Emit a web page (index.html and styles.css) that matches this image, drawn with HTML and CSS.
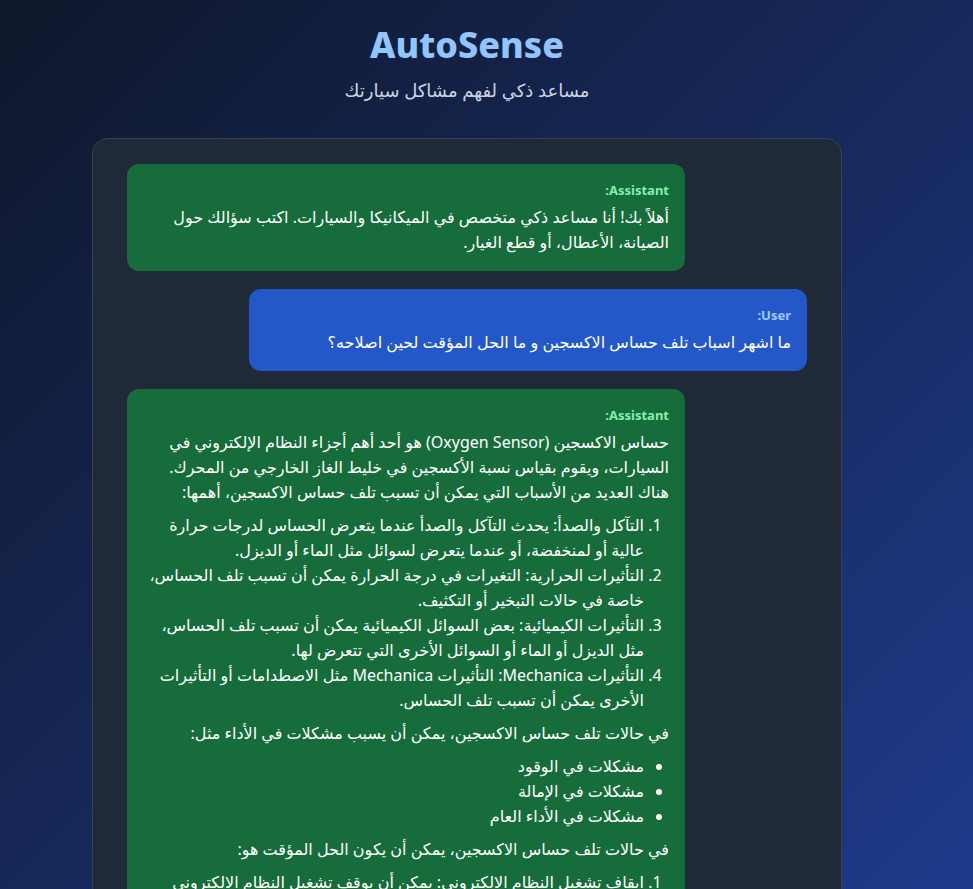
FILE: index.html
```html
<!DOCTYPE html>
<html lang="ar" dir="rtl">
<head>
<meta charset="utf-8">
<title>AutoSense</title>
<link rel="stylesheet" href="styles.css">
</head>
<body>
<div class="page">
  <header class="header">
    <h1 class="title" dir="ltr">AutoSense</h1>
    <p class="subtitle">مساعد ذكي لفهم مشاكل سيارتك</p>
  </header>
  <main class="chat">
    <div class="msg msg-assistant">
      <div class="label">Assistant:</div>
      <p>أهلاً بك! أنا مساعد ذكي متخصص في الميكانيكا والسيارات. اكتب سؤالك حول الصيانة، الأعطال، أو قطع الغيار.</p>
    </div>
    <div class="msg msg-user">
      <div class="label">User:</div>
      <p>ما اشهر اسباب تلف حساس الاكسجين و ما الحل المؤقت لحين اصلاحه؟</p>
    </div>
    <div class="msg msg-assistant">
      <div class="label">Assistant:</div>
      <p>حساس الاكسجين (Oxygen Sensor) هو أحد أهم أجزاء النظام الإلكتروني في السيارات، ويقوم بقياس نسبة الأكسجين في خليط الغاز الخارجي من المحرك. هناك العديد من الأسباب التي يمكن أن تسبب تلف حساس الاكسجين، أهمها:</p>
      <ol>
        <li>التآكل والصدأ: يحدث التآكل والصدأ عندما يتعرض الحساس لدرجات حرارة عالية أو لمنخفضة، أو عندما يتعرض لسوائل مثل الماء أو الديزل.</li>
        <li>التأثيرات الحرارية: التغيرات في درجة الحرارة يمكن أن تسبب تلف الحساس، خاصة في حالات التبخير أو التكثيف.</li>
        <li>التأثيرات الكيميائية: بعض السوائل الكيميائية يمكن أن تسبب تلف الحساس، مثل الديزل أو الماء أو السوائل الأخرى التي تتعرض لها.</li>
        <li>التأثيرات Mechanica: التأثيرات Mechanica مثل الاصطدامات أو التأثيرات الأخرى يمكن أن تسبب تلف الحساس.</li>
      </ol>
      <p>في حالات تلف حساس الاكسجين، يمكن أن يسبب مشكلات في الأداء مثل:</p>
      <ul>
        <li>مشكلات في الوقود</li>
        <li>مشكلات في الإمالة</li>
        <li>مشكلات في الأداء العام</li>
      </ul>
      <p>في حالات تلف حساس الاكسجين، يمكن أن يكون الحل المؤقت هو:</p>
      <ol>
        <li>ايقاف تشغيل النظام الالكتروني: يمكن أن يوقف تشغيل النظام الالكتروني الخاص بالحساس مؤقتاً حتى يتم اصلاحه.</li>
        <li>تنظيف الحساس: يمكن تنظيف الحساس من الأوساخ والرواسب.</li>
      </ol>
    </div>
  </main>
</div>
</body>
</html>
```
FILE: styles.css
```css
* { box-sizing: border-box; }
html, body { margin: 0; padding: 0; }
body {
  min-height: 100vh;
  background: linear-gradient(135deg, #0f172a 0%, #1e3a8a 100%) fixed;
  color: #f1f5f9;
  font-family: "Segoe UI", "Noto Sans", "DejaVu Sans", sans-serif;
}
.page {
  width: 934px;
  margin-left: 0;
  margin-right: auto;
  padding-top: 20px;
  padding-bottom: 40px;
}
.header { text-align: center; }
.title {
  margin: 0;
  font-size: 36px;
  line-height: 50px;
  font-weight: 800;
  color: #93c5fd;
}
.subtitle {
  margin: 6px 0 0;
  font-size: 18px;
  line-height: 28px;
  color: #cbd5e1;
}
.chat {
  margin: 34px auto 0;
  width: 750px;
  background: #1f2937;
  border: 1px solid #374151;
  border-radius: 16px;
  padding: 25px 34px;
  display: flex;
  flex-direction: column;
  gap: 18px;
}
.msg {
  width: 558px;
  border-radius: 12px;
  padding: 16px;
  font-size: 16px;
  line-height: 25px;
  color: #ffffff;
}
.msg-assistant { background: #166c3b; align-self: flex-end; }
.msg-user { background: #2458c8; align-self: flex-start; }
.label {
  font-size: 13px;
  line-height: 20px;
  font-weight: 700;
  margin-bottom: 5px;
}
.msg-assistant .label { color: #86efac; }
.msg-user .label { color: #a5c8fa; }
.msg p { margin: 8px 0; }
.msg .label + p { margin-top: 0; }
.msg ol, .msg ul { margin: 8px 0; padding: 0 25px 0 0; }
.msg > :last-child { margin-bottom: 0; }
```
